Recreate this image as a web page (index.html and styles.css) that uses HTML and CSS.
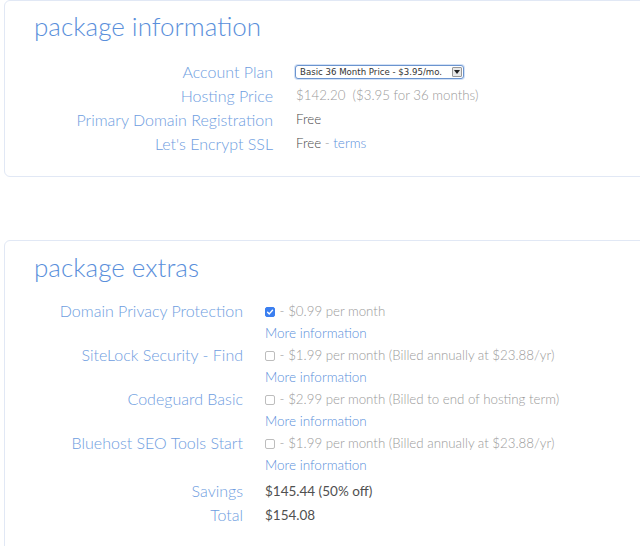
FILE: index.html
```html
<!DOCTYPE html>
<html>
<head>
<meta charset="utf-8">
<link rel="stylesheet" href="styles.css">
</head>
<body>
<section class="card card-info">
  <h2 class="card-title">package information</h2>
  <div class="rows rows-info">
    <div class="label">Account Plan</div>
    <div class="value">
      <div class="select">
        <span class="select-text">Basic 36 Month Price - $3.95/mo.</span>
        <span class="select-arrow"><svg width="6" height="4" viewBox="0 0 6 4"><path d="M0 0h6L3 4z" fill="#222"/></svg></span>
      </div>
    </div>
    <div class="label">Hosting Price</div>
    <div class="value muted">$142.20&nbsp; ($3.95 for 36 months)</div>
    <div class="label">Primary Domain Registration</div>
    <div class="value">Free</div>
    <div class="label">Let's Encrypt SSL</div>
    <div class="value">Free <span class="muted">-</span> <a class="link">terms</a></div>
  </div>
</section>

<section class="card card-extras">
  <h2 class="card-title">package extras</h2>
  <div class="rows rows-extras">
    <div class="label">Domain Privacy Protection</div>
    <div class="value muted"><span class="check checked"><svg width="10" height="10" viewBox="0 0 10 10"><path d="M2.6 5.2l1.7 1.7 3.2-3.6" fill="none" stroke="#fff" stroke-width="1.4" stroke-linecap="round" stroke-linejoin="round"/></svg></span> - $0.99 per month</div>
    <div class="label"></div>
    <div class="value"><a class="link">More information</a></div>

    <div class="label">SiteLock Security - Find</div>
    <div class="value muted"><span class="check"></span> - $1.99 per month (Billed annually at $23.88/yr)</div>
    <div class="label"></div>
    <div class="value"><a class="link">More information</a></div>

    <div class="label">Codeguard Basic</div>
    <div class="value muted"><span class="check"></span> - $2.99 per month (Billed to end of hosting term)</div>
    <div class="label"></div>
    <div class="value"><a class="link">More information</a></div>

    <div class="label">Bluehost SEO Tools Start</div>
    <div class="value muted"><span class="check"></span> - $1.99 per month (Billed annually at $23.88/yr)</div>
    <div class="label"></div>
    <div class="value"><a class="link">More information</a></div>

    <div class="label total-row first-total">Savings</div>
    <div class="value strong total-row first-total">$145.44 (50% off)</div>
    <div class="label total-row">Total</div>
    <div class="value strong total-row">$154.08</div>
  </div>
</section>
</body>
</html>
```

FILE: styles.css
```css
html, body {
  margin: 0;
  padding: 0;
  background: #ffffff;
  overflow: hidden;
  width: 640px;
  height: 546px;
}
body {
  font-family: Lato, "Open Sans", sans-serif;
  font-weight: 300;
}
.card {
  margin-left: 4px;
  width: 720px;
  border: 1px solid #e1e8f5;
  border-radius: 6px;
  box-sizing: border-box;
}
.card-info {
  height: 177px;
  padding-top: 8px;
}
.card-extras {
  margin-top: 63px;
  height: 330px;
  padding-top: 9px;
}
.card-title {
  margin: 0 0 16px 29px;
  font-size: 26px;
  line-height: 34px;
  font-weight: 300;
  color: #5a8fdb;
}
.rows {
  display: grid;
  align-items: center;
}
.rows-info {
  grid-template-columns: 268px 1fr;
  column-gap: 23px;
  grid-auto-rows: 24px;
}
.rows-extras {
  grid-template-columns: 238px 1fr;
  column-gap: 22px;
}
.rows-extras > div {
  line-height: 22px;
  height: 22px;
}
.rows-extras > .total-row {
  line-height: 24px;
  height: 24px;
}
.rows-extras > .first-total {
  margin-top: 3px;
}
.label {
  text-align: right;
  font-size: 16px;
  color: #6e9de0;
  white-space: nowrap;
}
.value {
  font-size: 13.3px;
  color: #4a4a4a;
  white-space: nowrap;
  font-weight: 300;
}
.value.muted, .muted {
  color: #9a9a9a;
  font-weight: 300;
}
.link {
  color: #5a8fdb;
  font-weight: 300;
  font-size: 13.5px;
}
.strong {
  color: #505050;
  font-weight: 400;
  font-size: 13.5px;
}
.select {
  display: inline-flex;
  align-items: center;
  justify-content: space-between;
  width: 169px;
  height: 14px;
  box-sizing: border-box;
  border: 1px solid #6b94cf;
  border-radius: 3px;
  box-shadow: 0 0 0 1px #d3e1f5;
  background: #fff;
  margin-left: -1px;
  padding: 0 1px 0 4px;
  vertical-align: middle;
}
.select-text {
  font-family: "DejaVu Sans", sans-serif;
  font-size: 8.6px;
  color: #333;
  font-weight: 400;
}
.select-arrow {
  display: inline-flex;
  align-items: center;
  justify-content: center;
  width: 10px;
  height: 10px;
  background: #e8e8e8;
  border: 1px solid #999;
  border-radius: 1px;
  box-sizing: border-box;
}
.check {
  display: inline-block;
  width: 10px;
  height: 10px;
  box-sizing: border-box;
  border: 1px solid #bdbdbd;
  border-radius: 2px;
  vertical-align: -1px;
  margin-right: 1px;
  background: #fff;
}
.check svg { display: block; margin: -1px; }
.check.checked {
  background: #3b7ff0;
  border-color: #3b7ff0;
}
```
